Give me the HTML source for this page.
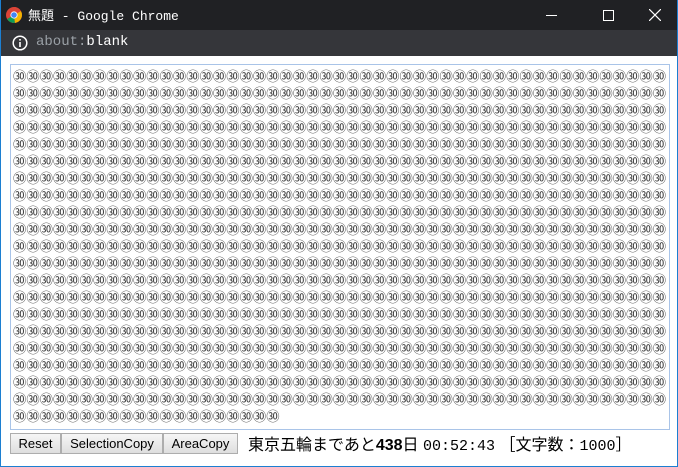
<!DOCTYPE html>
<html><head><meta charset="utf-8"><style>
html,body{margin:0;padding:0;width:678px;height:467px;overflow:hidden;background:#fff;font-family:"Liberation Sans","Noto Sans CJK JP",sans-serif}
.win{position:absolute;left:0;top:0;width:676px;height:466px;border:1px solid #1c7fd1;border-top:none}
.title{position:absolute;left:0;top:0;width:676px;height:30px;background:#202124;color:#fff;font:13px "Liberation Mono","Noto Sans CJK JP",monospace}
.addr{position:absolute;left:0;top:30px;width:676px;height:26px;background:#35363a;color:#fff;font:14px "Liberation Mono",monospace}
.ta{position:absolute;left:9px;top:64px;width:656px;height:362px;border:1px solid #a9c4e8;padding:2px 0 0 2px;font-family:"Noto Sans CJK JP",sans-serif;font-size:13.33px;line-height:17px;color:#444;word-break:break-all;overflow:hidden;box-sizing:content-box}
.ta span{display:block;width:653.4px}
.btn{position:absolute;top:433px;height:21px;background:linear-gradient(#f6f6f6,#dedede);border:1px solid #adadad;box-sizing:border-box;font:13px "Liberation Sans",sans-serif;color:#000;text-align:center;line-height:19px}
.info{position:absolute;left:247px;top:431px;font-size:16px;color:#000;white-space:nowrap}
</style></head><body>
<div class="win">
<div class="title">
<svg style="position:absolute;left:5px;top:7px" width="16" height="16" viewBox="0 0 16 16"><circle cx="8" cy="8" r="8" fill="#db4437"/><path d="M8 8 L1.1 12 A8 8 0 0 0 9 15.9 Z" fill="#0f9d58"/><path d="M8 8 L9 15.9 A8 8 0 0 0 14.9 4 Z" fill="#f4b400"/><path d="M8 8 L14.9 4 A8 8 0 0 0 8 0 Z" fill="#db4437"/><circle cx="8" cy="8" r="3.6" fill="#fff"/><circle cx="8" cy="8" r="2.8" fill="#4285f4"/></svg>
<span style="position:absolute;left:27px;top:5px">無題 - Google Chrome</span>
<div style="position:absolute;left:545px;top:15px;width:11px;height:1px;background:#fff"></div>
<div style="position:absolute;left:602px;top:10px;width:9px;height:9px;border:1px solid #fff"></div>
<svg style="position:absolute;left:648px;top:9px" width="12" height="12"><path d="M0 0L12 12M12 0L0 12" stroke="#fff" stroke-width="1.2"/></svg>
</div>
<div class="addr">
<svg style="position:absolute;left:11px;top:5px" width="16" height="16"><circle cx="8" cy="8" r="6.8" fill="none" stroke="#fff" stroke-width="1.5"/><rect x="7.2" y="7" width="1.6" height="5" fill="#fff"/><rect x="7.2" y="4" width="1.6" height="1.6" fill="#fff"/></svg>
<span style="position:absolute;left:35px;top:4px"><span style="color:#9aa0a6">about:</span>blank</span>
</div>
<div class="ta"><span id="t"></span></div>
<div class="btn" style="left:9px;width:51px">Reset</div>
<div class="btn" style="left:60px;width:102px">SelectionCopy</div>
<div class="btn" style="left:162px;width:75px">AreaCopy</div>
<div class="info">東京五輪まであと<b>438</b>日 <span style="font-family:'Liberation Mono',monospace;font-size:15px">00:52:43</span> ［文字数：<span style="font-family:'Liberation Mono',monospace;font-size:15px">1000</span>］</div>
</div>
<script>document.getElementById('t').textContent='㉚'.repeat(1000);</script>
</body></html>
